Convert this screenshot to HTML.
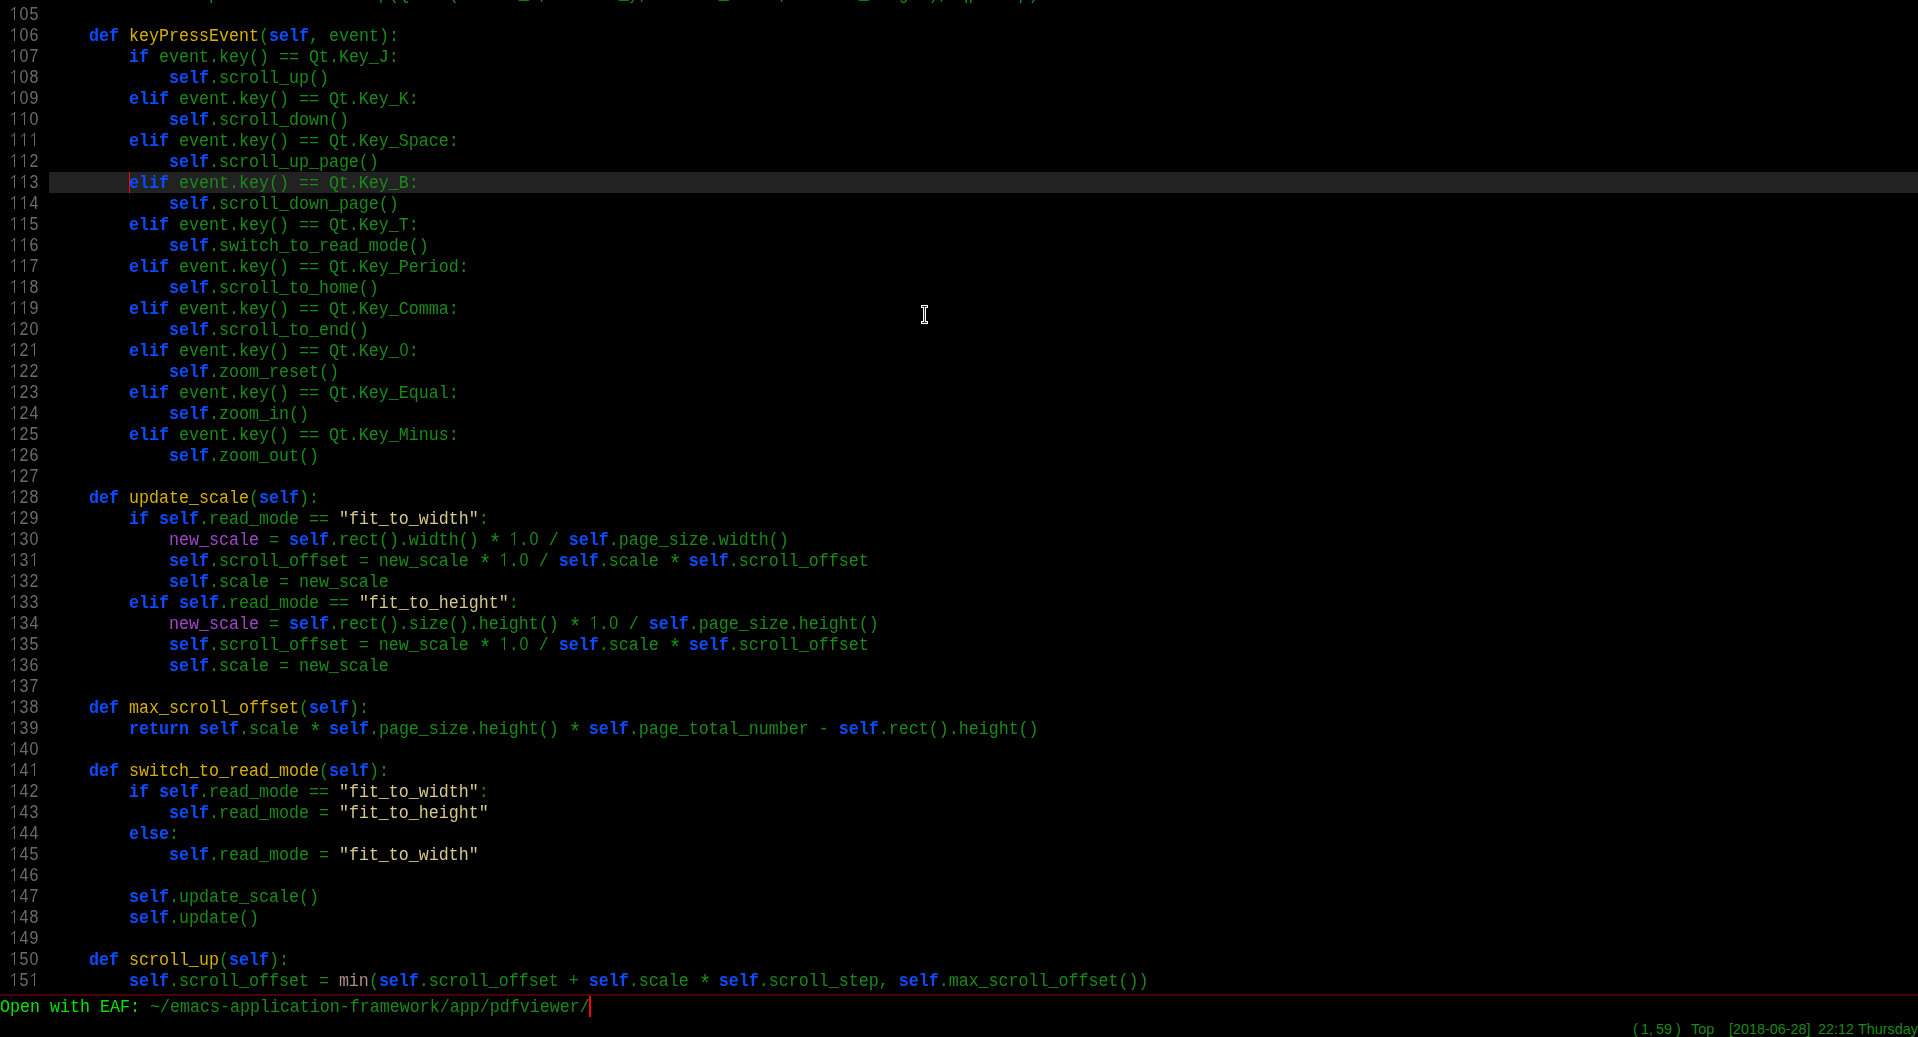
<!DOCTYPE html>
<html><head><meta charset="utf-8">
<style>
html,body{margin:0;padding:0;background:#000;}
body{width:1918px;height:1037px;overflow:hidden;position:relative;font-family:"Liberation Mono",monospace;font-size:16.667px;color:#1a8a1a;}
.ln{position:absolute;left:0;width:1918px;height:21px;line-height:21px;white-space:pre;}
.ln .num{position:absolute;left:9px;top:1px;color:#6c6c6c;transform:scaleY(1.1);transform-origin:0 15px;will-change:transform;}
.ln .code{position:absolute;left:49px;top:1px;right:0;transform:scaleY(1.1);transform-origin:0 15px;will-change:transform;}
#hlbar{position:absolute;left:49px;top:172px;width:1869px;height:21px;background:#222222;}
i{font-style:normal;}
b.ast{display:inline-block;width:10px;line-height:10px;text-align:center;font-weight:normal;font-size:21px;position:relative;top:5px;}
b.one{display:inline-block;width:10px;height:1px;position:relative;}
b.one::before{content:"";position:absolute;left:4.9px;bottom:0;width:1.3px;height:10.7px;background:currentColor;}
b.one::after{content:"";position:absolute;left:1.3px;top:-10.7px;width:4.9px;height:1.2px;background:currentColor;transform:rotate(-36deg);transform-origin:100% 0;}
b.d{display:inline-block;width:10px;line-height:10px;text-align:center;font-family:"Liberation Sans",sans-serif;font-size:16px;font-weight:normal;}
.k{color:#0c4cff;font-weight:bold;}
.f{color:#d7af00;}
.s{color:#d7c88c;}
.v{color:#a046c8;}
.b{color:#b09088;}
#cur{position:absolute;left:129px;top:172px;width:1px;height:21px;background:#ff0000;}
#sep{position:absolute;left:0;top:994px;width:1918px;height:2px;background:#480404;}
.p{color:#00e600;}
#mcur{position:absolute;left:589px;top:996px;width:2px;height:21px;background:#ff0000;}
.st{position:absolute;top:1020px;height:19px;line-height:19px;font-family:"Liberation Sans",sans-serif;font-size:14.4px;color:#1a8a1a;white-space:pre;}
#ibeam{position:absolute;left:920px;top:304px;}
</style></head><body>
<div id="hlbar"></div>
<div class="ln" style="top:-17px"><span class="num"><b class="one"></b><b class="d">0</b><b class="d">4</b></span><span class="code">                painter.drawPixmap(QRect(render_x, render_y, render_width, render_height), qpixmap)</span></div>
<div class="ln" style="top:4px"><span class="num"><b class="one"></b><b class="d">0</b><b class="d">5</b></span><span class="code"></span></div>
<div class="ln" style="top:25px"><span class="num"><b class="one"></b><b class="d">0</b><b class="d">6</b></span><span class="code">    <i class="k">def</i> <i class="f">keyPressEvent</i>(<i class="k">self</i>, event):</span></div>
<div class="ln" style="top:46px"><span class="num"><b class="one"></b><b class="d">0</b><b class="d">7</b></span><span class="code">        <i class="k">if</i> event.key() == Qt.Key_J:</span></div>
<div class="ln" style="top:67px"><span class="num"><b class="one"></b><b class="d">0</b><b class="d">8</b></span><span class="code">            <i class="k">self</i>.scroll_up()</span></div>
<div class="ln" style="top:88px"><span class="num"><b class="one"></b><b class="d">0</b><b class="d">9</b></span><span class="code">        <i class="k">elif</i> event.key() == Qt.Key_K:</span></div>
<div class="ln" style="top:109px"><span class="num"><b class="one"></b><b class="one"></b><b class="d">0</b></span><span class="code">            <i class="k">self</i>.scroll_down()</span></div>
<div class="ln" style="top:130px"><span class="num"><b class="one"></b><b class="one"></b><b class="one"></b></span><span class="code">        <i class="k">elif</i> event.key() == Qt.Key_Space:</span></div>
<div class="ln" style="top:151px"><span class="num"><b class="one"></b><b class="one"></b><b class="d">2</b></span><span class="code">            <i class="k">self</i>.scroll_up_page()</span></div>
<div class="ln hl" style="top:172px"><span class="num"><b class="one"></b><b class="one"></b><b class="d">3</b></span><span class="code">        <i class="k">elif</i> event.key() == Qt.Key_B:</span></div>
<div class="ln" style="top:193px"><span class="num"><b class="one"></b><b class="one"></b><b class="d">4</b></span><span class="code">            <i class="k">self</i>.scroll_down_page()</span></div>
<div class="ln" style="top:214px"><span class="num"><b class="one"></b><b class="one"></b><b class="d">5</b></span><span class="code">        <i class="k">elif</i> event.key() == Qt.Key_T:</span></div>
<div class="ln" style="top:235px"><span class="num"><b class="one"></b><b class="one"></b><b class="d">6</b></span><span class="code">            <i class="k">self</i>.switch_to_read_mode()</span></div>
<div class="ln" style="top:256px"><span class="num"><b class="one"></b><b class="one"></b><b class="d">7</b></span><span class="code">        <i class="k">elif</i> event.key() == Qt.Key_Period:</span></div>
<div class="ln" style="top:277px"><span class="num"><b class="one"></b><b class="one"></b><b class="d">8</b></span><span class="code">            <i class="k">self</i>.scroll_to_home()</span></div>
<div class="ln" style="top:298px"><span class="num"><b class="one"></b><b class="one"></b><b class="d">9</b></span><span class="code">        <i class="k">elif</i> event.key() == Qt.Key_Comma:</span></div>
<div class="ln" style="top:319px"><span class="num"><b class="one"></b><b class="d">2</b><b class="d">0</b></span><span class="code">            <i class="k">self</i>.scroll_to_end()</span></div>
<div class="ln" style="top:340px"><span class="num"><b class="one"></b><b class="d">2</b><b class="one"></b></span><span class="code">        <i class="k">elif</i> event.key() == Qt.Key_<b class="d">0</b>:</span></div>
<div class="ln" style="top:361px"><span class="num"><b class="one"></b><b class="d">2</b><b class="d">2</b></span><span class="code">            <i class="k">self</i>.zoom_reset()</span></div>
<div class="ln" style="top:382px"><span class="num"><b class="one"></b><b class="d">2</b><b class="d">3</b></span><span class="code">        <i class="k">elif</i> event.key() == Qt.Key_Equal:</span></div>
<div class="ln" style="top:403px"><span class="num"><b class="one"></b><b class="d">2</b><b class="d">4</b></span><span class="code">            <i class="k">self</i>.zoom_in()</span></div>
<div class="ln" style="top:424px"><span class="num"><b class="one"></b><b class="d">2</b><b class="d">5</b></span><span class="code">        <i class="k">elif</i> event.key() == Qt.Key_Minus:</span></div>
<div class="ln" style="top:445px"><span class="num"><b class="one"></b><b class="d">2</b><b class="d">6</b></span><span class="code">            <i class="k">self</i>.zoom_out()</span></div>
<div class="ln" style="top:466px"><span class="num"><b class="one"></b><b class="d">2</b><b class="d">7</b></span><span class="code"></span></div>
<div class="ln" style="top:487px"><span class="num"><b class="one"></b><b class="d">2</b><b class="d">8</b></span><span class="code">    <i class="k">def</i> <i class="f">update_scale</i>(<i class="k">self</i>):</span></div>
<div class="ln" style="top:508px"><span class="num"><b class="one"></b><b class="d">2</b><b class="d">9</b></span><span class="code">        <i class="k">if</i> <i class="k">self</i>.read_mode == <i class="s">"fit_to_width"</i>:</span></div>
<div class="ln" style="top:529px"><span class="num"><b class="one"></b><b class="d">3</b><b class="d">0</b></span><span class="code">            <i class="v">new_scale</i> = <i class="k">self</i>.rect().width() <b class="ast">*</b> <b class="one"></b>.<b class="d">0</b> / <i class="k">self</i>.page_size.width()</span></div>
<div class="ln" style="top:550px"><span class="num"><b class="one"></b><b class="d">3</b><b class="one"></b></span><span class="code">            <i class="k">self</i>.scroll_offset = new_scale <b class="ast">*</b> <b class="one"></b>.<b class="d">0</b> / <i class="k">self</i>.scale <b class="ast">*</b> <i class="k">self</i>.scroll_offset</span></div>
<div class="ln" style="top:571px"><span class="num"><b class="one"></b><b class="d">3</b><b class="d">2</b></span><span class="code">            <i class="k">self</i>.scale = new_scale</span></div>
<div class="ln" style="top:592px"><span class="num"><b class="one"></b><b class="d">3</b><b class="d">3</b></span><span class="code">        <i class="k">elif</i> <i class="k">self</i>.read_mode == <i class="s">"fit_to_height"</i>:</span></div>
<div class="ln" style="top:613px"><span class="num"><b class="one"></b><b class="d">3</b><b class="d">4</b></span><span class="code">            <i class="v">new_scale</i> = <i class="k">self</i>.rect().size().height() <b class="ast">*</b> <b class="one"></b>.<b class="d">0</b> / <i class="k">self</i>.page_size.height()</span></div>
<div class="ln" style="top:634px"><span class="num"><b class="one"></b><b class="d">3</b><b class="d">5</b></span><span class="code">            <i class="k">self</i>.scroll_offset = new_scale <b class="ast">*</b> <b class="one"></b>.<b class="d">0</b> / <i class="k">self</i>.scale <b class="ast">*</b> <i class="k">self</i>.scroll_offset</span></div>
<div class="ln" style="top:655px"><span class="num"><b class="one"></b><b class="d">3</b><b class="d">6</b></span><span class="code">            <i class="k">self</i>.scale = new_scale</span></div>
<div class="ln" style="top:676px"><span class="num"><b class="one"></b><b class="d">3</b><b class="d">7</b></span><span class="code"></span></div>
<div class="ln" style="top:697px"><span class="num"><b class="one"></b><b class="d">3</b><b class="d">8</b></span><span class="code">    <i class="k">def</i> <i class="f">max_scroll_offset</i>(<i class="k">self</i>):</span></div>
<div class="ln" style="top:718px"><span class="num"><b class="one"></b><b class="d">3</b><b class="d">9</b></span><span class="code">        <i class="k">return</i> <i class="k">self</i>.scale <b class="ast">*</b> <i class="k">self</i>.page_size.height() <b class="ast">*</b> <i class="k">self</i>.page_total_number - <i class="k">self</i>.rect().height()</span></div>
<div class="ln" style="top:739px"><span class="num"><b class="one"></b><b class="d">4</b><b class="d">0</b></span><span class="code"></span></div>
<div class="ln" style="top:760px"><span class="num"><b class="one"></b><b class="d">4</b><b class="one"></b></span><span class="code">    <i class="k">def</i> <i class="f">switch_to_read_mode</i>(<i class="k">self</i>):</span></div>
<div class="ln" style="top:781px"><span class="num"><b class="one"></b><b class="d">4</b><b class="d">2</b></span><span class="code">        <i class="k">if</i> <i class="k">self</i>.read_mode == <i class="s">"fit_to_width"</i>:</span></div>
<div class="ln" style="top:802px"><span class="num"><b class="one"></b><b class="d">4</b><b class="d">3</b></span><span class="code">            <i class="k">self</i>.read_mode = <i class="s">"fit_to_height"</i></span></div>
<div class="ln" style="top:823px"><span class="num"><b class="one"></b><b class="d">4</b><b class="d">4</b></span><span class="code">        <i class="k">else</i>:</span></div>
<div class="ln" style="top:844px"><span class="num"><b class="one"></b><b class="d">4</b><b class="d">5</b></span><span class="code">            <i class="k">self</i>.read_mode = <i class="s">"fit_to_width"</i></span></div>
<div class="ln" style="top:865px"><span class="num"><b class="one"></b><b class="d">4</b><b class="d">6</b></span><span class="code"></span></div>
<div class="ln" style="top:886px"><span class="num"><b class="one"></b><b class="d">4</b><b class="d">7</b></span><span class="code">        <i class="k">self</i>.update_scale()</span></div>
<div class="ln" style="top:907px"><span class="num"><b class="one"></b><b class="d">4</b><b class="d">8</b></span><span class="code">        <i class="k">self</i>.update()</span></div>
<div class="ln" style="top:928px"><span class="num"><b class="one"></b><b class="d">4</b><b class="d">9</b></span><span class="code"></span></div>
<div class="ln" style="top:949px"><span class="num"><b class="one"></b><b class="d">5</b><b class="d">0</b></span><span class="code">    <i class="k">def</i> <i class="f">scroll_up</i>(<i class="k">self</i>):</span></div>
<div class="ln" style="top:970px"><span class="num"><b class="one"></b><b class="d">5</b><b class="one"></b></span><span class="code">        <i class="k">self</i>.scroll_offset = <i class="b">min</i>(<i class="k">self</i>.scroll_offset + <i class="k">self</i>.scale <b class="ast">*</b> <i class="k">self</i>.scroll_step, <i class="k">self</i>.max_scroll_offset())</span></div>
<div id="cur"></div>
<div id="sep"></div>
<div class="ln" style="top:996px"><span class="code" style="left:0"><span class="p">Open with EAF: </span>~/emacs-application-framework/app/pdfviewer/</span></div>
<div id="mcur"></div>
<div class="st" style="left:1633px">(</div><div class="st" style="left:1641px">1,</div><div class="st" style="left:1656px">59</div><div class="st" style="left:1676px">)</div><div class="st" style="left:1691px">Top</div><div class="st" style="left:1729px">[2018-06-28]</div><div class="st" style="left:1818px">22:12</div><div class="st" style="left:1858px">Thursday</div>
<svg id="ibeam" width="10" height="22" viewBox="0 0 10 22" shape-rendering="crispEdges"><path d="M1 1h7v3h-2v13h2v3h-7v-3h2v-13h-2z" fill="#fff"/><path d="M2 2h5v1h-2v15h2v1h-5v-1h2v-15h-2z" fill="#333"/></svg>
</body></html>
